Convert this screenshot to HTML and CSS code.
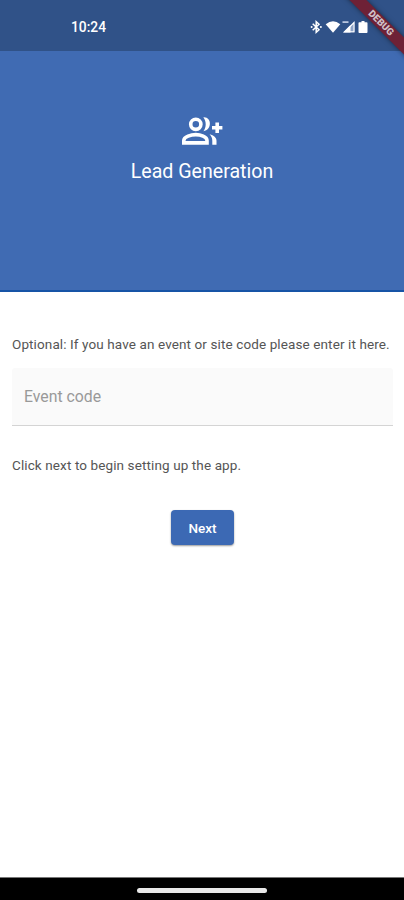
FILE: index.html
```
<!DOCTYPE html>
<html lang="en">
<head>
<meta charset="utf-8">
<title>Lead Generation</title>
<link rel="stylesheet" href="styles.css">
</head>
<body>
<div class="screen">
  <header class="status">
    <span class="clock">10:24</span>
    <svg class="indicators" width="60" height="16" viewBox="0 0 60 16" fill="#fff">
      <path d="M2.7 4.7 9 10.8 6.2 13.4V2.6L9 5.2 2.7 11.3" fill="none" stroke="#fff" stroke-width="1.5"/>
      <circle cx="1.6" cy="8" r="1"/><circle cx="10.9" cy="8" r="1"/>
      <path d="M15.7 5.2Q23 -.9 30.3 5.2L23 13.8Z"/>
      <path d="M33 13.5 44.5 2v11.5Z" fill="#8fa4c8"/>
      <path d="M33 13.5 40.5 6v7.5Z"/>
      <path d="M35 12.8 44 3.6v9.2Z" fill="none" stroke="#fff" stroke-width="1.1"/>
      <path d="M32.5 2.2h6v1.8h-6z" fill="#b9c6df"/>
      <path d="M51.5 2h3v1.3h2.2q.8 0 .8.8v9q0 .9-.8.9h-7.4q-.8 0-.8-.9v-9q0-.8.8-.8h2.2z"/>
    </svg>
  </header>
  <section class="hero">
    <svg class="logo" width="42" height="30" viewBox="181 116 42 30" fill="none" stroke="#fff" stroke-width="3.6">
      <circle cx="195.8" cy="124.3" r="5.1"/>
      <path d="M183.8 142.9v-2.4c0-3.9 7.4-5.9 12-5.9s11.2 2 11.2 5.9v2.4Z"/>
      <path d="M203.4 117.4c8.3-.8 9 12.8 0 13.8 3.1-4 3.1-9.8 0-13.8Z" fill="#fff" stroke="none"/>
      <path d="M209.6 134.3c4.3 1.2 6.9 3.4 6.9 6.4v4h-4.2v-4c0-2.6-.9-4.5-2.7-6.4Z" fill="#fff" stroke="none"/>
      <path d="M217.2 122.6v10.4M212 127.8h10.4"/>
    </svg>
    <h1>Lead Generation</h1>
  </section>
  <main>
    <p>Optional: If you have an event or site code please enter it here.</p>
    <input class="field" type="text" placeholder="Event code" aria-label="Event code">
    <p>Click next to begin setting up the app.</p>
    <button class="next">Next</button>
  </main>
  <footer class="nav"><span class="handle"></span></footer>
  <div class="corner"><span class="ribbon">DEBUG</span></div>
</div>
</body>
</html>
```
FILE: styles.css
```
* { box-sizing: border-box; }
body { margin: 0; font-family: Roboto, sans-serif; background: #fff; }
.screen {
  position: relative;
  display: flex;
  flex-direction: column;
  width: 404px;
  height: 900px;
  overflow: hidden;
}
.status {
  display: flex;
  align-items: center;
  justify-content: space-between;
  height: 51px;
  padding: 2px 34px 0 71px;
  background: #305288;
  color: #fff;
}
.clock { font-size: 13.8px; font-weight: 500; line-height: 16px; }
.hero {
  display: flex;
  flex-direction: column;
  align-items: center;
  height: 241px;
  padding-top: 65px;
  background: #406bb3;
  border-bottom: 2px solid #1654a6;
  color: #fff;
}
.logo { display: block; }
h1 { margin: 14px 0 0; font-size: 19.6px; font-weight: 400; line-height: 24px; white-space: nowrap; }
main {
  flex: 1;
  display: flex;
  flex-direction: column;
  align-items: flex-start;
  padding: 44px 11px 0 12px;
}
p {
  margin: 0;
  font-size: 13.5px;
  line-height: 16px;
  letter-spacing: .11px;
  color: #555;
  white-space: nowrap;
}
.field {
  width: 100%;
  height: 58px;
  margin: 16px 0 31px;
  padding: 0 12px;
  border: 0;
  border-bottom: 1px solid #d4d4d4;
  border-radius: 3px 3px 0 0;
  background: #fafafa;
  font: 15.8px Roboto, sans-serif;
}
.field::placeholder { color: #999; opacity: 1; }
.next {
  align-self: center;
  width: 63px;
  height: 35px;
  margin-top: 37px;
  padding: 0;
  border: 0;
  border-radius: 4px;
  background: #3c69b4;
  box-shadow: 0 1px 2px rgba(0, 0, 0, .4);
  color: #fff;
  font: 500 13.5px Roboto, sans-serif;
}
.nav {
  display: flex;
  justify-content: center;
  height: 23px;
  padding-top: 10px;
  background: #000;
  border-top: 1px solid #777;
}
.handle { width: 130px; height: 5px; border-radius: 3px; background: #e8e8e8; }
.corner { position: absolute; top: 0; right: 0; width: 80px; height: 80px; overflow: hidden; }
.ribbon {
  position: absolute;
  left: 7px;
  top: 17px;
  width: 100px;
  height: 12px;
  transform: rotate(45deg);
  background: #6e2136;
  box-shadow: 0 0 5px rgba(0, 0, 0, .5);
  color: #d0c0c8;
  font-size: 9.8px;
  font-weight: 900;
  line-height: 12px;
  text-align: center;
}
```
